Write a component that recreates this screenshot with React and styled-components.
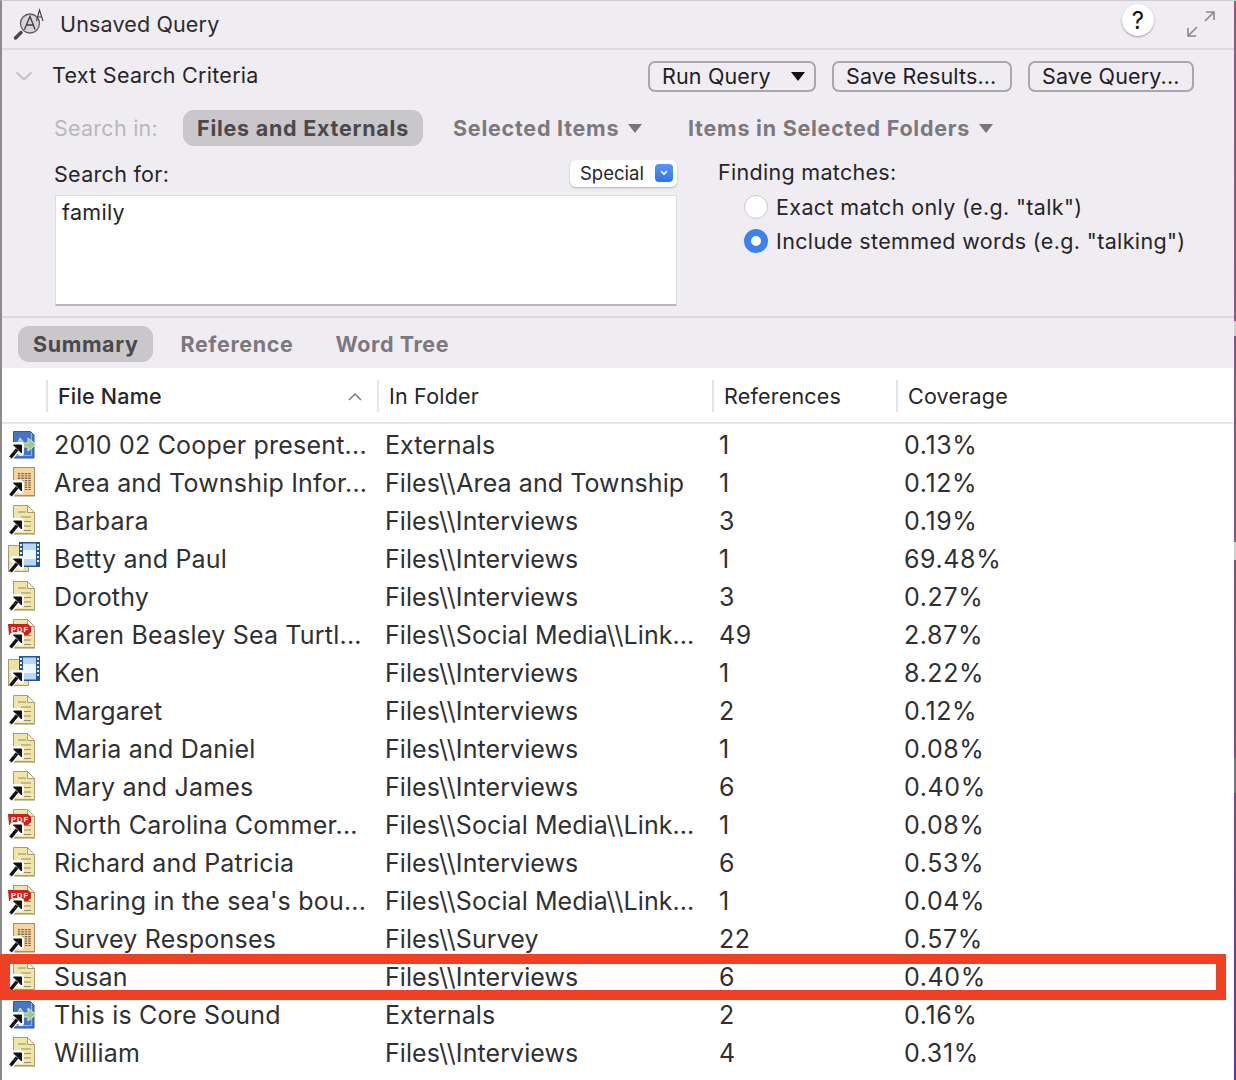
import React from 'react';
import styled, { createGlobalStyle } from 'styled-components';

const GlobalStyle = createGlobalStyle`
  html, body {
    margin: 0;
    padding: 0;
    background: #fff;
  }
  * {
    box-sizing: border-box;
  }
`;

const rows = [
  { icon: 'external', name: '2010 02 Cooper present...', folder: 'Externals', refs: '1', cover: '0.13%' },
  { icon: 'sheet', name: 'Area and Township Infor...', folder: 'Files\\\\Area and Township', refs: '1', cover: '0.12%' },
  { icon: 'doc', name: 'Barbara', folder: 'Files\\\\Interviews', refs: '3', cover: '0.19%' },
  { icon: 'video', name: 'Betty and Paul', folder: 'Files\\\\Interviews', refs: '1', cover: '69.48%' },
  { icon: 'doc', name: 'Dorothy', folder: 'Files\\\\Interviews', refs: '3', cover: '0.27%' },
  { icon: 'pdf', name: 'Karen Beasley Sea Turtl...', folder: 'Files\\\\Social Media\\\\Link...', refs: '49', cover: '2.87%' },
  { icon: 'video', name: 'Ken', folder: 'Files\\\\Interviews', refs: '1', cover: '8.22%' },
  { icon: 'doc', name: 'Margaret', folder: 'Files\\\\Interviews', refs: '2', cover: '0.12%' },
  { icon: 'doc', name: 'Maria and Daniel', folder: 'Files\\\\Interviews', refs: '1', cover: '0.08%' },
  { icon: 'doc', name: 'Mary and James', folder: 'Files\\\\Interviews', refs: '6', cover: '0.40%' },
  { icon: 'pdf', name: 'North Carolina Commer...', folder: 'Files\\\\Social Media\\\\Link...', refs: '1', cover: '0.08%' },
  { icon: 'doc', name: 'Richard and Patricia', folder: 'Files\\\\Interviews', refs: '6', cover: '0.53%' },
  { icon: 'pdf', name: "Sharing in the sea's bou...", folder: 'Files\\\\Social Media\\\\Link...', refs: '1', cover: '0.04%' },
  { icon: 'sheet', name: 'Survey Responses', folder: 'Files\\\\Survey', refs: '22', cover: '0.57%' },
  { icon: 'doc', name: 'Susan', folder: 'Files\\\\Interviews', refs: '6', cover: '0.40%', marked: true },
  { icon: 'external', name: 'This is Core Sound', folder: 'Externals', refs: '2', cover: '0.16%' },
  { icon: 'doc', name: 'William', folder: 'Files\\\\Interviews', refs: '4', cover: '0.31%' },
];

function DocPage() {
  return (
    <>
      <path d="M5.500 2.500h14l7 7v21h-21z" fill="#f3e5a8" stroke="#a59c7c" />
      <path d="M19.500 2.500v7h7z" fill="#fbf6dc" stroke="#a59c7c" />
      <path d="M10 9h8M13 14h10M13 18.500h10M13 23h10M13 27.500h10" stroke="#948c6c" />
      <path d="M6 31.500h21" stroke="#c9c5b4" />
    </>
  );
}

function ShortcutArrow() {
  return (
    <>
      <path d="M3 30l6-7.500M5 18h8v8z" stroke="#fff" strokeWidth="6" fill="#fff" strokeLinejoin="round" />
      <path d="M2.500 30.500L9 22.500" stroke="#111" strokeWidth="3.500" />
      <path d="M5.500 18h8v8z" fill="#111" stroke="#111" />
    </>
  );
}

function RowIcon({ kind }) {
  return (
    <IconSvg viewBox="0 0 36 36" width="36" height="36">
      {kind === 'doc' && <DocPage />}
      {kind === 'sheet' && (
        <>
          <rect x="5.500" y="2.500" width="21" height="28" fill="#f9d49c" stroke="#a58f6c" />
          <path d="M6 31.500h21" stroke="#c9c5b4" />
          <path d="M11 8v17M14.500 8v17M18 8v17M21.500 8v17" stroke="#75664c" strokeWidth="2.500" strokeDasharray="1.300 1" />
        </>
      )}
      {kind === 'external' && (
        <>
          <path d="M5.500 4.500h17l3.500 3.500v23h-20.500z" fill="#4676c8" stroke="#2f579f" />
          <path d="M23.500 6v22.500H8" fill="none" stroke="#8dabde" />
          <path d="M12 11l4 5h4v-5l8 6.500-8 6.500v-4h-5l-5-4z" fill="#a3c690" stroke="#dfe9cf" />
        </>
      )}
      {kind === 'pdf' && (
        <>
          <DocPage />
          <path d="M0 7h20l3 3v5l-3 3H1z" fill="#c8231f" />
          <Pdf x="3" y="15">PDF</Pdf>
        </>
      )}
      {kind === 'video' && (
        <>
          <path d="M.5 4.500h20v26H.5z" fill="#efe1a4" stroke="#a69c78" />
          <rect x="11" y="1" width="21" height="25" fill="#2a5491" />
          <rect x="15" y="2.500" width="13" height="22" fill="#b5d8f4" />
          <rect x="15" y="9" width="13" height="9" fill="#eef7fd" />
          <path d="M13 3v20M30 3v20" stroke="#e7eef7" strokeWidth="2" strokeDasharray="2 2" />
        </>
      )}
      <ShortcutArrow />
    </IconSvg>
  );
}

function QueryIcon() {
  return (
    <svg viewBox="0 0 34 34" width="34" height="34">
      <circle cx="18" cy="15.500" r="9.500" fill="#d6d4d8" stroke="#5f5d63" strokeWidth="1.300" />
      <path d="M12.500 21.500l5.500-13 5 13M14.500 17h7" fill="none" stroke="#3d3b40" strokeWidth="1.300" />
      <path d="M9 24.500L3.500 30" stroke="#47464a" strokeWidth="3.500" strokeLinecap="round" />
      <path d="M24.500 13l3-11 3.500 11M26 9h4" fill="none" stroke="#3d3b40" strokeWidth="1.100" />
    </svg>
  );
}

function ExpandIcon() {
  return (
    <svg viewBox="0 0 28 28" width="28" height="28">
      <path d="M19 2h8v8M27 2l-9 9M1 18v8h8M1 26l9-9" fill="none" stroke="#8a888d" strokeWidth="1.600" />
    </svg>
  );
}

function Triangle({ color }) {
  return (
    <svg viewBox="0 0 14 9" width="14" height="9">
      <path d="M0 0h14L7 9z" fill={color} />
    </svg>
  );
}

export default function App() {
  return (
    <>
      <GlobalStyle />
      <Window>
        <TitleBar>
          <TitleLeft>
            <QueryIcon />
            <Title>Unsaved Query</Title>
          </TitleLeft>
          <TitleRight>
            <HelpButton>?</HelpButton>
            <ExpandIcon />
          </TitleRight>
        </TitleBar>

        <Criteria>
          <CriteriaHead>
            <HeadLeft>
              <svg viewBox="0 0 18 10" width="18" height="10">
                <path d="M1.500 1.500L9 8.500l7.500-7" fill="none" stroke="#c2c0c4" strokeWidth="2" />
              </svg>
              <SectionTitle>Text Search Criteria</SectionTitle>
            </HeadLeft>
            <Buttons>
              <PushButton $width={168}>
                Run Query
                <Triangle color="#111" />
              </PushButton>
              <PushButton $width={180}>Save Results...</PushButton>
              <PushButton $width={166}>Save Query...</PushButton>
            </Buttons>
          </CriteriaHead>

          <ScopeRow>
            <ScopeLabel>Search in:</ScopeLabel>
            <Pill $width={240}>Files and Externals</Pill>
            <ScopeOption $width={235}>
              Selected Items
              <Triangle color="#77757a" />
            </ScopeOption>
            <ScopeOption>
              Items in Selected Folders
              <Triangle color="#77757a" />
            </ScopeOption>
          </ScopeRow>

          <SearchColumns>
            <SearchFor>
              <SearchForHead>
                <FieldLabel>Search for:</FieldLabel>
                <SpecialSelect>
                  Special
                  <SelectChip>
                    <svg viewBox="0 0 10 8" width="10" height="8">
                      <path d="M2 2l3 3 3-3" fill="none" stroke="#fff" strokeWidth="1.600" />
                    </svg>
                  </SelectChip>
                </SpecialSelect>
              </SearchForHead>
              <SearchBox>family</SearchBox>
            </SearchFor>
            <Matches>
              <FieldLabel>Finding matches:</FieldLabel>
              <RadioRow>
                <Radio />
                Exact match only (e.g. "talk")
              </RadioRow>
              <RadioRow>
                <Radio $on />
                Include stemmed words (e.g. "talking")
              </RadioRow>
            </Matches>
          </SearchColumns>
        </Criteria>

        <Tabs>
          <Tab $active>Summary</Tab>
          <Tab $width={155}>Reference</Tab>
          <Tab>Word Tree</Tab>
        </Tabs>

        <Table>
          <HeaderRow>
            <HeaderCell $width={331} $sorted>
              File Name
              <svg viewBox="0 0 14 9" width="14" height="9">
                <path d="M1 8l6-6 6 6" fill="none" stroke="#7d7b80" strokeWidth="1.500" />
              </svg>
            </HeaderCell>
            <HeaderCell $width={335}>In Folder</HeaderCell>
            <HeaderCell $width={184}>References</HeaderCell>
            <HeaderCell $width={200}>Coverage</HeaderCell>
          </HeaderRow>
          <Rows>
            {rows.map((row) => (
              <Row key={row.name}>
                <IconCell>
                  <RowIcon kind={row.icon} />
                </IconCell>
                <Cell>{row.name}</Cell>
                <FolderCell>{row.folder}</FolderCell>
                <NumberCell>{row.refs}</NumberCell>
                <NumberCell>{row.cover}</NumberCell>
                {row.marked && <Highlight />}
              </Row>
            ))}
          </Rows>
        </Table>
      </Window>
    </>
  );
}

const Window = styled.div`
  width: 1236px;
  height: 1080px;
  position: relative;
  background: #fff;
  border-left: 2px solid #8b8a8d;
  border-top: 1px solid #cfcdd2;
  padding-right: 2px;
  font-family: Inter, 'Liberation Sans', sans-serif;
  color: #262527;

  &::after {
    content: '';
    position: absolute;
    top: 0;
    right: 0;
    width: 2px;
    height: 100%;
    background: linear-gradient(
      #94587c 0,
      #8f5480 320px,
      #cfcfcf 320px,
      #cfcfcf 335px,
      #8e5284 335px,
      #8c5086 541px,
      #cfcfcf 541px,
      #cfcfcf 559px,
      #8a4a8a 559px,
      #864690 757px,
      #77767a 757px,
      #77767a 792px,
      #82409a 792px,
      #6f28a5 100%
    );
  }
`;

const TitleBar = styled.div`
  height: 49px;
  background: #f0edf2;
  border-bottom: 2px solid #dcdadd;
  display: flex;
  align-items: center;
  justify-content: space-between;
  padding: 0 19px 0 10px;
`;

const TitleLeft = styled.div`
  display: flex;
  align-items: center;
  gap: 14px;
`;

const Title = styled.div`
  margin-top: -2px;
  font-size: 21.500px;
  letter-spacing: 0.15px;
  color: #2c2b2e;
`;

const TitleRight = styled.div`
  align-self: flex-start;
  padding-top: 3px;
  display: flex;
  align-items: flex-start;
  gap: 33px;
  svg {
    margin-top: 6px;
  }
`;

const HelpButton = styled.div`
  width: 32px;
  height: 32px;
  border-radius: 50%;
  background: #fff;
  box-shadow: 0 1px 2px rgba(0, 0, 0, 0.35);
  display: flex;
  align-items: center;
  justify-content: center;
  font-size: 24px;
  color: #111;
`;

const Criteria = styled.div`
  height: 268px;
  background: #f0edf2;
  border-bottom: 2px solid #dcdadd;
  padding: 10px 40px 0 13px;
`;

const CriteriaHead = styled.div`
  display: flex;
  align-items: center;
  justify-content: space-between;
  height: 32px;
`;

const HeadLeft = styled.div`
  display: flex;
  align-items: center;
  gap: 19px;
`;

const SectionTitle = styled.div`
  margin-top: -2px;
  font-size: 21.500px;
  letter-spacing: 0.27px;
  color: #262527;
`;

const Buttons = styled.div`
  display: flex;
  gap: 16px;
`;

const PushButton = styled.div`
  width: ${(p) => p.$width}px;
  height: 31px;
  border: 2px solid #a9a7ac;
  border-radius: 7px;
  display: flex;
  align-items: center;
  justify-content: space-between;
  padding: 0 9px 0 12px;
  font-size: 21.500px;
  letter-spacing: 0.15px;
  white-space: nowrap;
  color: #1e1d1f;
`;

const ScopeRow = styled.div`
  display: flex;
  align-items: center;
  margin-top: 18px;
  height: 36px;
  padding-left: 39px;
`;

const ScopeLabel = styled.div`
  width: 129px;
  font-size: 21.500px;
  letter-spacing: 0.25px;
  color: #b9b7bb;
`;

const Pill = styled.div`
  width: ${(p) => p.$width}px;
  height: 36px;
  margin-right: 30px;
  border-radius: 11px;
  background: #c9c7ca;
  display: flex;
  align-items: center;
  justify-content: center;
  font-size: 21.500px;
  font-weight: 700;
  letter-spacing: 0.75px;
  color: #4a494c;
  white-space: nowrap;
`;

const ScopeOption = styled.div`
  ${(p) => p.$width && `width: ${p.$width}px;`}
  display: flex;
  align-items: center;
  gap: 9px;
  font-size: 21.500px;
  font-weight: 700;
  letter-spacing: 0.75px;
  color: #7b797e;
  white-space: nowrap;
`;

const SearchColumns = styled.div`
  display: flex;
  margin-top: 14px;
  padding-left: 39px;
`;

const SearchFor = styled.div`
  width: 623px;
`;

const SearchForHead = styled.div`
  display: flex;
  align-items: center;
  justify-content: space-between;
  height: 27px;
`;

const FieldLabel = styled.div`
  font-size: 21.500px;
  letter-spacing: 0.3px;
  color: #262527;
`;

const SpecialSelect = styled.div`
  width: 107px;
  height: 27px;
  margin-top: -1px;
  background: #fff;
  border-radius: 6px;
  box-shadow: 0 1px 2px rgba(0, 0, 0, 0.25);
  display: flex;
  align-items: center;
  justify-content: space-between;
  padding: 0 4px 0 10px;
  font-size: 18.500px;
`;

const SelectChip = styled.div`
  width: 18px;
  height: 18px;
  border-radius: 4px;
  background: linear-gradient(#5b96f5, #2f72ea);
  display: flex;
  align-items: center;
  justify-content: center;
`;

const SearchBox = styled.div`
  height: 111px;
  margin: 8px 0 0 1px;
  background: #fff;
  border: 1px solid #dedde0;
  border-bottom: 2px solid #b9b8bb;
  padding: 3px 6px;
  font-size: 21.500px;
  letter-spacing: 0.3px;
`;

const Matches = styled.div`
  margin-left: 41px;
  margin-top: -1px;
  display: flex;
  flex-direction: column;
`;

const RadioRow = styled.div`
  display: flex;
  align-items: center;
  gap: 8px;
  height: 34px;
  padding-left: 26px;
  font-size: 21.500px;
  letter-spacing: 0.36px;
  white-space: nowrap;
  &:nth-of-type(2) {
    margin-top: 5px;
  }
`;

const Radio = styled.span`
  width: 24px;
  height: 24px;
  flex: none;
  border-radius: 50%;
  background: #fff;
  border: ${(p) => (p.$on ? '7px solid #3b82f0' : '1px solid #c9c7cb')};
`;

const Tabs = styled.div`
  height: 50px;
  background: #f0edf2;
  display: flex;
  align-items: flex-start;
  padding: 8px 0 0 16px;
`;

const Tab = styled.div`
  ${(p) => p.$width && `width: ${p.$width}px;`}
  height: 36px;
  display: flex;
  align-items: center;
  padding: ${(p) => (p.$active ? '0 15px' : '0')};
  margin-right: ${(p) => (p.$active ? '27px' : '0')};
  border-radius: 11px;
  background: ${(p) => (p.$active ? '#c9c7ca' : 'transparent')};
  font-size: 21.500px;
  font-weight: 700;
  letter-spacing: 0.6px;
  color: ${(p) => (p.$active ? '#4a494c' : '#7b797e')};
`;

const Table = styled.div`
  background: #fff;
`;

const HeaderRow = styled.div`
  height: 56px;
  border-bottom: 2px solid #e6e5e7;
  padding: 12px 0 0 44px;
  display: flex;
`;

const HeaderCell = styled.div`
  width: ${(p) => p.$width}px;
  height: 32px;
  border-left: 2px solid #e6e5e7;
  padding: 0 15px 0 10px;
  display: flex;
  align-items: center;
  justify-content: space-between;
  font-size: 21.500px;
  font-weight: ${(p) => (p.$sorted ? 500 : 400)};
  letter-spacing: 0.2px;
  color: #262527;
`;

const Rows = styled.div`
  padding-top: 2px;
`;

const Row = styled.div`
  position: relative;
  height: 38px;
  display: grid;
  grid-template-columns: 52px 331px 334px 185px 1fr;
  align-items: center;
  font-size: 25px;
  letter-spacing: 0.2px;
  color: #303032;
`;

const IconCell = styled.div`
  display: flex;
  align-items: center;
  padding-left: 6px;
`;

const IconSvg = styled.svg`
  display: block;
  overflow: visible;
`;

const Pdf = styled.text`
  font-family: 'Liberation Sans', sans-serif;
  font-size: 7.500px;
  font-weight: 700;
  letter-spacing: 1px;
  fill: #fff;
`;

const Cell = styled.div`
  white-space: nowrap;
`;

const FolderCell = styled(Cell)`
  letter-spacing: 0.08px;
`;

const NumberCell = styled(Cell)`
  letter-spacing: 0.6px;
`;

const Highlight = styled.div`
  position: absolute;
  left: -2px;
  top: -4px;
  width: 1226px;
  height: 46px;
  border: 10px solid #ef4023;
  pointer-events: none;
`;
